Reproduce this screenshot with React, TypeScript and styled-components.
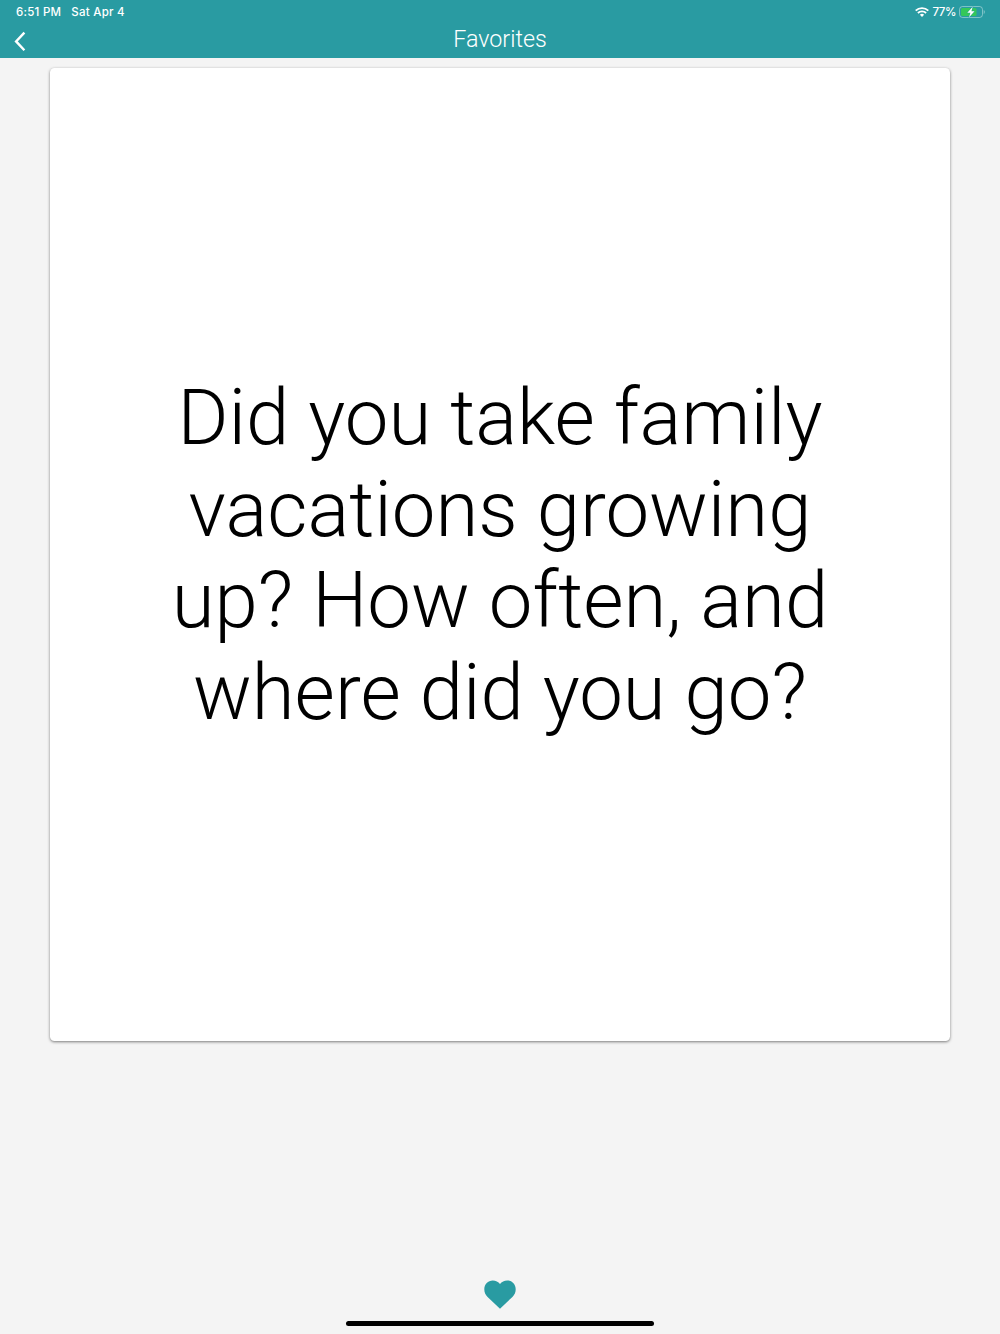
import React from "react";
import styled, { createGlobalStyle } from "styled-components";

const Global = createGlobalStyle`
  * { box-sizing: border-box; }
  html, body { margin: 0; background: #f4f4f4; }
`;

const Screen = styled.div`
  height: 1334px;
  display: flex;
  flex-direction: column;
  background: #f4f4f4;
  font-family: Roboto, sans-serif;
`;

const Header = styled.header`
  height: 57.5px;
  flex: none;
  background: #299ba2;
  color: #fff;
`;

const StatusBar = styled.div`
  height: 24px;
  padding: 0 15px 0 16px;
  display: flex;
  align-items: center;
  justify-content: space-between;
  font: 500 11.5px/24px Inter, sans-serif;
`;

const StatusGroup = styled.div<{ $gap: number; $tracking: number }>`
  display: flex;
  align-items: center;
  gap: ${(p) => p.$gap}px;
  letter-spacing: ${(p) => p.$tracking}px;
`;

const NavBar = styled.div`
  height: 33px;
  display: grid;
  grid-template-columns: 40px 1fr 40px;
`;

const BackButton = styled.button`
  border: 0;
  padding: 7px 0 0 13px;
  background: none;
  color: inherit;
  display: flex;
  align-items: flex-start;
`;

const Title = styled.h1`
  margin: 0;
  text-align: center;
  font-size: 23.3px;
  font-weight: 300;
  line-height: 31px;
`;

const Card = styled.main`
  height: 973.5px;
  flex: none;
  margin: 10px 50px 0;
  border-radius: 4.5px;
  background: #fff;
  box-shadow: 0 1px 3px rgba(0, 0, 0, 0.5);
  display: flex;
  align-items: center;
  justify-content: center;
`;

const Question = styled.p`
  margin: 0;
  padding-top: 2px;
  text-align: center;
  color: #000;
  font-size: 77.9px;
  font-weight: 300;
  line-height: 91.5px;
  white-space: pre-line;
`;

const Footer = styled.footer`
  flex: 1;
  display: flex;
  flex-direction: column;
  align-items: center;
  justify-content: flex-end;
  gap: 12px;
  padding-bottom: 8px;
`;

const FavoriteButton = styled.button`
  border: 0;
  padding: 0;
  background: none;
  display: flex;
`;

const HomeIndicator = styled.div`
  width: 308px;
  height: 5px;
  border-radius: 3px;
  background: #000;
`;

export default function App() {
  return (
    <Screen>
      <Global />
      <Header>
        <StatusBar>
          <StatusGroup $gap={10} $tracking={0.25}><span>6:51 PM</span><span>Sat Apr 4</span></StatusGroup>
          <StatusGroup $gap={3} $tracking={-0.4}>
            <svg width="14" height="10" viewBox="0 0 14 10" fill="none" stroke="#fff" strokeWidth="1.8">
              <path d="M.7 3.7a9 9 0 0 1 12.6 0M2.9 6a5.9 5.9 0 0 1 8.2 0" />
              <path d="M7 10 4.9 7.8a3 3 0 0 1 4.2 0Z" fill="#fff" stroke="none" />
            </svg>
            <span>77%</span>
            <svg width="26" height="12" viewBox="0 0 26 12">
              <rect x=".5" y=".5" width="23" height="11" rx="3" fill="none" stroke="#fff" opacity=".4" />
              <rect x="2" y="2" width="15.5" height="8" rx="1.6" fill="#34c759" />
              <path d="M24.7 4v4q1.2-.6 1.2-2t-1.2-2" fill="#fff" opacity=".4" />
              <path
                d="m13.7.8-5.4 5.9h3.1L10.1 11.2l5.4-5.9h-3.1Z"
                fill="#fff"
                stroke="#299ba2"
                strokeWidth=".8"
                paintOrder="stroke"
              />
            </svg>
          </StatusGroup>
        </StatusBar>
        <NavBar>
          <BackButton aria-label="Back">
            <svg width="14" height="21" viewBox="0 0 14 21" fill="none" stroke="#fff" strokeWidth="2.4">
              <path d="m11.4 1.6-8.3 8.8 8.3 8.8" />
            </svg>
          </BackButton>
          <Title>Favorites</Title>
        </NavBar>
      </Header>
      <Card>
        <Question>{"Did you take family\nvacations growing\nup? How often, and\nwhere did you go?"}</Question>
      </Card>
      <Footer>
        <FavoriteButton aria-label="Favorite">
          <svg width="32" height="29" viewBox="0 0 32 29" fill="#299ba2">
            <path d="M16 28.7 3.6 16.9C1.4 14.7.3 12.4.3 9.3.3 4.3 4 .5 8.8.5c2.9 0 5.5 1.3 7.2 3.5C17.7 1.8 20.3.5 23.2.5c4.8 0 8.5 3.8 8.5 8.8 0 3.1-1.1 5.4-3.3 7.6Z" />
          </svg>
        </FavoriteButton>
        <HomeIndicator />
      </Footer>
    </Screen>
  );
}
